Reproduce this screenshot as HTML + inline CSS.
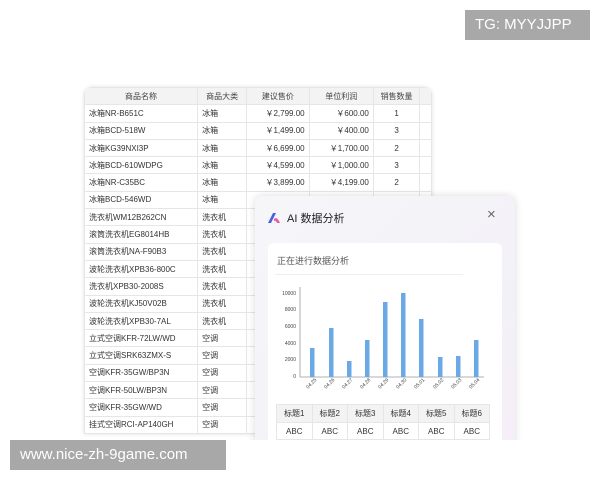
<!DOCTYPE html><html><head><meta charset="utf-8"><style>
body{margin:0;width:600px;height:480px;background:#fff;position:relative;overflow:hidden;font-family:"Liberation Sans","Noto Sans CJK SC",sans-serif;}
.t{position:absolute;left:84px;top:87px;width:348px;border-radius:8px 8px 0 0;overflow:hidden;background:#fff;box-shadow:0 0 4px rgba(0,0,0,.12);}
table{border-collapse:collapse;font-size:8px;color:#333;}
td,th{border:1px solid #e6e6e6;height:16.3px;padding:0 4px;white-space:nowrap;}
th{background:#f3f3f3;font-weight:normal;color:#444;}
.r{text-align:right}.c{text-align:center}
.p{position:absolute;left:255px;top:196px;width:260px;height:260px;border-radius:8px;background:linear-gradient(135deg,#f6f6f9,#f3f1f8 70%,#f7eef8);box-shadow:0 0 8px rgba(0,0,0,.15);}
.card{position:absolute;left:13px;top:47px;width:234px;height:220px;background:#fff;border-radius:6px;}
.wm{position:absolute;background:#a8a8a8;color:#fff;font-size:15px;line-height:30px;padding:0 10px;}
</style></head><body>
<div class="t"><table>
<tr><th style="width:106px">商品名称</th><th style="width:41px">商品大类</th><th style="width:55px">建议售价</th><th style="width:57px">单位利润</th><th style="width:38px">销售数量</th><th style="width:3px"></th></tr>
<tr><td>冰箱NR-B651C</td><td>冰箱</td><td class="r">￥2,799.00</td><td class="r">￥600.00</td><td class="c">1</td><td></td></tr>
<tr><td>冰箱BCD-518W</td><td>冰箱</td><td class="r">￥1,499.00</td><td class="r">￥400.00</td><td class="c">3</td><td></td></tr>
<tr><td>冰箱KG39NXI3P</td><td>冰箱</td><td class="r">￥6,699.00</td><td class="r">￥1,700.00</td><td class="c">2</td><td></td></tr>
<tr><td>冰箱BCD-610WDPG</td><td>冰箱</td><td class="r">￥4,599.00</td><td class="r">￥1,000.00</td><td class="c">3</td><td></td></tr>
<tr><td>冰箱NR-C35BC</td><td>冰箱</td><td class="r">￥3,899.00</td><td class="r">￥4,199.00</td><td class="c">2</td><td></td></tr>
<tr><td>冰箱BCD-546WD</td><td>冰箱</td><td></td><td></td><td></td><td></td></tr>
<tr><td>洗衣机WM12B262CN</td><td>洗衣机</td><td></td><td></td><td></td><td></td></tr>
<tr><td>滚筒洗衣机EG8014HB</td><td>洗衣机</td><td></td><td></td><td></td><td></td></tr>
<tr><td>滚筒洗衣机NA-F90B3</td><td>洗衣机</td><td></td><td></td><td></td><td></td></tr>
<tr><td>波轮洗衣机XPB36-800C</td><td>洗衣机</td><td></td><td></td><td></td><td></td></tr>
<tr><td>洗衣机XPB30-2008S</td><td>洗衣机</td><td></td><td></td><td></td><td></td></tr>
<tr><td>波轮洗衣机KJ50V02B</td><td>洗衣机</td><td></td><td></td><td></td><td></td></tr>
<tr><td>波轮洗衣机XPB30-7AL</td><td>洗衣机</td><td></td><td></td><td></td><td></td></tr>
<tr><td>立式空调KFR-72LW/WD</td><td>空调</td><td></td><td></td><td></td><td></td></tr>
<tr><td>立式空调SRK63ZMX-S</td><td>空调</td><td></td><td></td><td></td><td></td></tr>
<tr><td>空调KFR-35GW/BP3N</td><td>空调</td><td></td><td></td><td></td><td></td></tr>
<tr><td>空调KFR-50LW/BP3N</td><td>空调</td><td></td><td></td><td></td><td></td></tr>
<tr><td>空调KFR-35GW/WD</td><td>空调</td><td></td><td></td><td></td><td></td></tr>
<tr><td>挂式空调RCI-AP140GH</td><td>空调</td><td></td><td></td><td></td><td></td></tr>
</table></div>
<div class="p">
<svg style="position:absolute;left:12px;top:16px" width="14" height="12" viewBox="0 0 14 12"><path d="M1 11 L6 1 L9 1 L4 11Z" fill="#4b5ee8"/><path d="M7 7 Q10 4 13 11 L10 11 Q9 8 7 9Z" fill="#e65aa0"/></svg>
<div style="position:absolute;left:32px;top:14px;font-size:11px;color:#222;">AI 数据分析</div>
<div style="position:absolute;left:232px;top:10px;font-size:15px;color:#666;">×</div>
<div class="card">
<div style="position:absolute;left:9px;top:11px;font-size:9px;color:#555;">正在进行数据分析</div>
<div style="position:absolute;left:7px;top:31px;width:188px;border-top:1px solid #eee;"></div>
<svg style="position:absolute;left:0;top:0" width="234" height="150" font-family="Liberation Sans" font-size="5" fill="#444">
<line x1="32" y1="44" x2="32" y2="134" stroke="#999" stroke-width=".8"/>
<line x1="32" y1="134" x2="216" y2="134" stroke="#999" stroke-width=".8"/>
<g text-anchor="end"><text x="28" y="52">10000</text><text x="28" y="85">6000</text><text x="28" y="68">8000</text><text x="28" y="102">4000</text><text x="28" y="118">2000</text><text x="28" y="135">0</text></g>
<g fill="#6aa9e6">
<rect x="42" y="105" width="4.5" height="29"/><rect x="61" y="85" width="4.5" height="49"/><rect x="79" y="118" width="4.5" height="16"/><rect x="97" y="97" width="4.5" height="37"/><rect x="115" y="59" width="4.5" height="75"/><rect x="133" y="50" width="4.5" height="84"/><rect x="151" y="76" width="4.5" height="58"/><rect x="170" y="114" width="4.5" height="20"/><rect x="188" y="113" width="4.5" height="21"/><rect x="206" y="97" width="4.5" height="37"/>
</g>
<g><text transform="translate(40,146) rotate(-45)">04.25</text><text transform="translate(58,146) rotate(-45)">04.26</text><text transform="translate(76,146) rotate(-45)">04.27</text><text transform="translate(94,146) rotate(-45)">04.28</text><text transform="translate(112,146) rotate(-45)">04.29</text><text transform="translate(130,146) rotate(-45)">04.30</text><text transform="translate(148,146) rotate(-45)">05.01</text><text transform="translate(167,146) rotate(-45)">05.02</text><text transform="translate(185,146) rotate(-45)">05.03</text><text transform="translate(203,146) rotate(-45)">05.04</text></g>
</svg>
<table style="position:absolute;left:8px;top:161px;width:214px;font-size:8px;">
<tr><td class="c" style="background:#f3f3f3;height:17px">标题1</td><td class="c" style="background:#f3f3f3">标题2</td><td class="c" style="background:#f3f3f3">标题3</td><td class="c" style="background:#f3f3f3">标题4</td><td class="c" style="background:#f3f3f3">标题5</td><td class="c" style="background:#f3f3f3">标题6</td></tr>
<tr><td class="c">ABC</td><td class="c">ABC</td><td class="c">ABC</td><td class="c">ABC</td><td class="c">ABC</td><td class="c">ABC</td></tr>
</table>
</div></div>
<div style="position:absolute;left:0;top:440px;width:600px;height:40px;background:#fff"></div>
<div class="wm" style="left:465px;top:10px;width:105px;">TG: MYYJJPP</div>
<div class="wm" style="left:10px;top:440px;width:196px;">www.nice-zh-9game.com</div>
</body></html>
